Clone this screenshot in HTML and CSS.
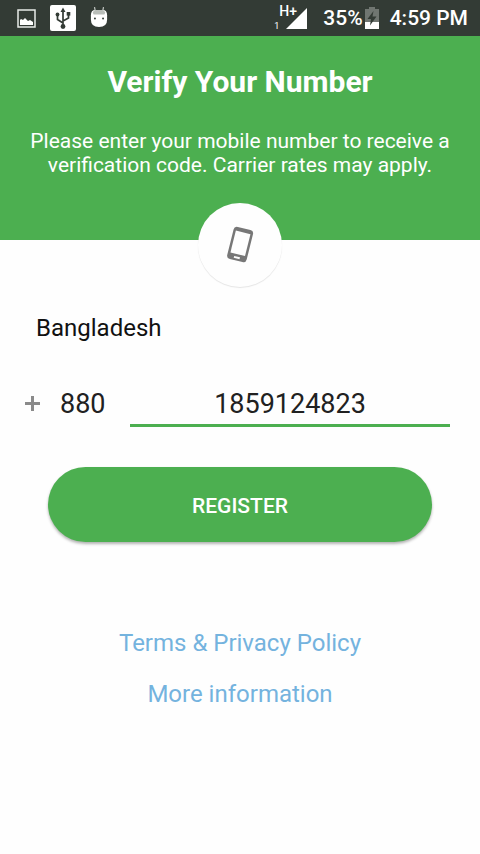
FILE: index.html
```html
<!DOCTYPE html>
<html lang="en">
<head>
<meta charset="utf-8">
<meta name="viewport" content="width=device-width, initial-scale=1">
<title>Verify Your Number</title>
<link rel="stylesheet" href="styles.css">
</head>
<body>
<div class="status">
  <div class="status-left">
    <svg width="19" height="19" viewBox="0 0 19 19" aria-hidden="true">
      <rect x="1" y="1" width="17" height="17" fill="none" stroke="#e8ebe8" stroke-width="1.500"/>
      <path d="M3 16V11L4 10L6 11L8 9L11 12L13 11L16 13V16Z" fill="#fff"/>
    </svg>
    <svg width="26" height="26" viewBox="0 0 26 26" aria-hidden="true">
      <rect width="26" height="26" rx="2" fill="#fff"/>
      <path d="M13 5V21M13 18L7.500 14.500V10M13 16L18.500 13V9" fill="none" stroke="#333b35" stroke-width="1.700"/>
      <g fill="#333b35"><path d="M13 2.500L15.500 7H10.500Z"/><circle cx="13" cy="21.500" r="2.400"/><circle cx="7.500" cy="9.500" r="1.900"/><rect x="16.700" y="7" width="3.600" height="3.600"/></g>
    </svg>
    <svg width="18" height="24" viewBox="0 0 20 24" aria-hidden="true">
      <path d="M5 0L6 5M15 0L14 5" stroke="#c8ccc8" stroke-width="1.300"/>
      <path d="M1 9Q1 3 6 3H14Q19 3 19 9V14Q19 22 10 22Q1 22 1 14Z" fill="#fff"/>
      <path d="M3 6Q4 3 6 3H14Q16 3 17 6L16 8H4Z" fill="#b9beb9"/>
      <circle cx="5.500" cy="12.500" r="1.100" fill="#333b35"/><circle cx="14.500" cy="12.500" r="1.100" fill="#333b35"/>
    </svg>
  </div>
  <div class="status-right">
    <div class="signal">
      <span class="sim">1</span>
      <span class="network">H+</span>
      <svg width="21" height="21" viewBox="0 0 21 21" aria-hidden="true"><path d="M21 0V21H0Z" fill="#fff"/></svg>
    </div>
    <span>35%</span>
    <svg class="battery" width="14" height="22" viewBox="0 0 14 22" aria-hidden="true">
      <path d="M4 0H10V2H14V22H0V2H4Z" fill="#707671"/>
      <path d="M0 15H14V22H0Z" fill="#fff"/>
      <path d="M8.500 4L2.500 12H6L5 18.500L11.500 9.500H7.500Z" fill="#333b35"/>
    </svg>
    <span>4:59 PM</span>
  </div>
</div>
<header class="hero">
  <h1>Verify Your Number</h1>
  <p>Please enter your mobile number to receive a verification code. Carrier rates may apply.</p>
  <div class="badge">
    <svg width="84" height="84" viewBox="0 0 84 84" aria-hidden="true">
      <g transform="rotate(14 42 42)">
        <rect x="32" y="25" width="20" height="33" rx="3.500" fill="#777"/>
        <rect x="34.500" y="29" width="15" height="22.500" fill="#fefefe"/>
        <rect x="39" y="54" width="6" height="2" fill="#fefefe"/>
      </g>
    </svg>
  </div>
</header>
<main>
  <form class="form">
    <select class="country" aria-label="Country"><option>Bangladesh</option></select>
    <div class="row">
      <span class="plus" aria-hidden="true"></span>
      <input class="code" type="tel" aria-label="Country code" value="880">
      <input class="number" type="tel" aria-label="Mobile number" value="1859124823">
    </div>
    <button class="register" type="button">REGISTER</button>
  </form>
  <nav class="links">
    <a href="#terms">Terms &amp; Privacy Policy</a>
    <a href="#more">More information</a>
  </nav>
</main>
</body>
</html>
```
FILE: styles.css
```css
* {
  box-sizing: border-box;
}

body {
  margin: 0;
  background: #fefefe;
  color: #212121;
  font-family: Roboto, "Liberation Sans", sans-serif;
}

.status {
  display: flex;
  justify-content: space-between;
  align-items: center;
  height: 36px;
  padding: 0 12px 0 17px;
  background: #333b35;
  color: #fff;
  font-size: 21px;
  font-weight: 500;
}

.status-left,
.status-right {
  display: flex;
  align-items: center;
}

.status-left {
  gap: 14px;
}

.signal {
  position: relative;
  display: flex;
  align-items: flex-end;
  padding-left: 12px;
  margin-right: 16px;
}

.sim,
.network {
  position: absolute;
  line-height: 1;
}

.sim {
  left: 0;
  bottom: -2px;
  font-size: 9px;
  font-weight: 400;
}

.network {
  left: 5px;
  top: -4px;
  font-size: 14px;
}

.battery {
  margin: 0 11px 0 2px;
}

.hero {
  position: relative;
  height: 204px;
  padding: 28px 24px 0;
  background: #4caf50;
  color: #fff;
  text-align: center;
}

h1 {
  margin: 0;
  font-size: 30px;
  font-weight: 700;
  line-height: 36px;
}

.hero p {
  margin: 29px 0 0;
  font-size: 21px;
  line-height: 24px;
}

.badge {
  position: absolute;
  left: 50%;
  bottom: -47px;
  width: 84px;
  height: 84px;
  margin-left: -42px;
  border-radius: 50%;
  background: #fefefe;
  box-shadow: 0 1px 1px rgba(0, 0, 0, 0.1);
}

.form {
  display: flex;
  flex-direction: column;
  padding: 72px 30px 0 24px;
}

select,
input {
  appearance: none;
  border: 0;
  border-radius: 0;
  margin: 0;
  padding: 0;
  background: transparent;
  color: inherit;
  font-family: inherit;
  outline: 0;
}

.country {
  height: 32px;
  margin-left: 12px;
  color: #111;
  font-size: 24px;
}

.row {
  display: flex;
  align-items: center;
  margin-top: 36px;
}

.plus {
  width: 17px;
  height: 15px;
  background:
    linear-gradient(#8a8a8a, #8a8a8a) center / 15px 3px no-repeat,
    linear-gradient(#8a8a8a, #8a8a8a) center / 3px 15px no-repeat;
}

.code,
.number {
  height: 47px;
  padding-top: 4px;
  border-bottom: 3px solid transparent;
  font-size: 27px;
}

.code {
  width: 58px;
  margin: 0 12px 0 19px;
}

.number {
  flex: 1;
  min-width: 0;
  border-bottom-color: #4caf50;
  text-align: center;
}

.register {
  height: 75px;
  margin: 40px 18px 0 24px;
  padding: 2px 0 0;
  border: 0;
  border-radius: 38px;
  background: #4caf50;
  box-shadow: 0 2px 3px rgba(0, 0, 0, 0.3);
  color: #fff;
  font-family: inherit;
  font-size: 21px;
  font-weight: 500;
}

.links {
  display: flex;
  flex-direction: column;
  align-items: center;
  gap: 19px;
  padding: 85px 0 32px;
}

.links a {
  color: #74b3de;
  font-size: 24px;
  line-height: 32px;
  text-decoration: none;
}
```
